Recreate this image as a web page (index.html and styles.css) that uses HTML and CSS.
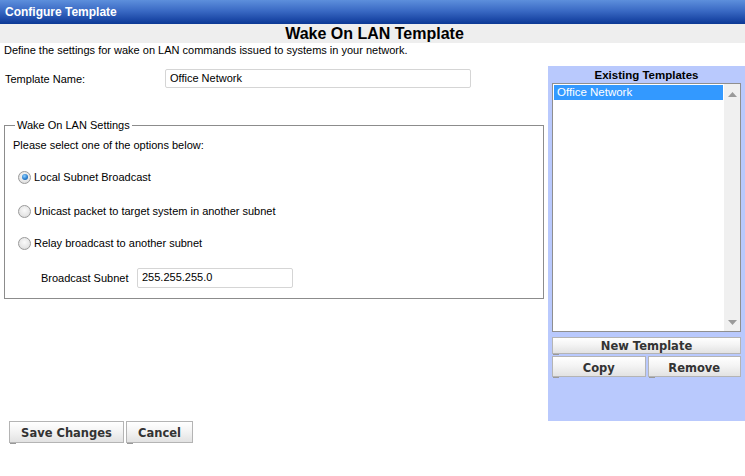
FILE: index.html
```html
<!DOCTYPE html>
<html>
<head>
<meta charset="utf-8">
<link rel="stylesheet" href="styles.css">
</head>
<body>
<div class="titlebar">Configure Template</div>
<div class="heading">Wake On LAN Template</div>
<div class="desc">Define the settings for wake on LAN commands issued to systems in your network.</div>
<div class="main">
  <div class="left">
    <div class="name-row">
      <span class="name-label">Template Name:</span>
      <div class="textbox name-box">Office Network</div>
    </div>
    <fieldset class="settings">
      <legend>Wake On LAN Settings</legend>
      <div class="prompt">Please select one of the options below:</div>
      <div class="opt opt1"><span class="radio checked"></span>Local Subnet Broadcast</div>
      <div class="opt opt2"><span class="radio"></span>Unicast packet to target system in another subnet</div>
      <div class="opt opt3"><span class="radio"></span>Relay broadcast to another subnet</div>
      <div class="subnet-row">
        <span class="subnet-label">Broadcast Subnet</span>
        <div class="textbox subnet-box">255.255.255.0</div>
      </div>
    </fieldset>
  </div>
  <div class="panel">
    <div class="panel-title">Existing Templates</div>
    <div class="listbox">
      <div class="list-items">
        <div class="item selected">Office Network</div>
      </div>
      <div class="scrollbar">
        <svg class="arrow" width="9" height="5" viewBox="0 0 9 5"><path d="M0 5 L4.5 0 L9 5 Z" fill="#9a9a9a"/></svg>
        <svg class="arrow" width="9" height="5" viewBox="0 0 9 5"><path d="M0 0 L4.5 5 L9 0 Z" fill="#9a9a9a"/></svg>
      </div>
    </div>
    <div class="btn wide">New Template</div>
    <div class="btn-row">
      <div class="btn half">Copy</div>
      <div class="btn half">Remove</div>
    </div>
  </div>
</div>
<div class="footer">
  <div class="btn save">Save Changes</div>
  <div class="btn cancel">Cancel</div>
</div>
</body>
</html>
```
FILE: styles.css
```css
* { box-sizing: border-box; }
html, body { margin: 0; padding: 0; background: #fff; }
body {
  width: 745px;
  height: 476px;
  font-family: "Liberation Sans", Arial, sans-serif;
  font-size: 11px;
  color: #000;
  overflow: hidden;
}
.titlebar {
  height: 24px;
  background: linear-gradient(to bottom, #5d8fdc 0%, #3a6ac4 45%, #1d4aa8 80%, #0b3894 100%);
  color: #fff;
  font-weight: bold;
  font-size: 12px;
  line-height: 24px;
  padding-left: 5px;
}
.heading {
  height: 19px;
  background: #eeeeee;
  text-align: center;
  font-weight: bold;
  font-size: 16px;
  line-height: 20px;
  padding-left: 4px;
}
.desc {
  height: 15px;
  line-height: 15px;
  padding-left: 4px;
}
.main {
  display: flex;
  margin-top: 8px;
  height: 355px;
}
.left {
  width: 548px;
  padding-left: 4px;
}
.name-row {
  display: flex;
  align-items: center;
  margin-top: 3px;
  height: 19px;
}
.name-label {
  width: 161px;
  padding-left: 1px;
}
.textbox {
  height: 19px;
  border: 1px solid #d5d5d5;
  border-radius: 2px;
  line-height: 17px;
  padding-left: 4px;
  background: #fff;
}
.name-box { width: 306px; }
.settings {
  margin: 31px 0 0 0;
  width: 540px;
  height: 180px;
  border: 1px solid #8c8c8c;
  padding: 0 0 0 8px;
}
.settings legend {
  padding: 0 2px;
  margin-left: 2px;
  font-size: 11px;
}
.prompt {
  margin-top: 8px;
  height: 13px;
  line-height: 13px;
}
.opt {
  display: flex;
  align-items: center;
  height: 14px;
  line-height: 14px;
}
.opt1 { margin-top: 18px; }
.opt2 { margin-top: 20px; }
.opt3 { margin-top: 18px; }
.radio {
  width: 13px;
  height: 13px;
  border-radius: 50%;
  border: 1px solid #9a9a9a;
  background: radial-gradient(circle at 50% 40%, #fafafa 0%, #e6e6e6 60%, #d2d2d2 100%);
  margin: 0 3px 0 5px;
  position: relative;
}
.radio.checked::after {
  content: "";
  position: absolute;
  left: 2.5px; top: 2.5px;
  width: 6px; height: 6px;
  border-radius: 50%;
  background: radial-gradient(circle at 40% 35%, #8fd0ff 0%, #2a7fcf 55%, #0d4f95 100%);
}
.subnet-row {
  display: flex;
  align-items: center;
  margin-top: 18px;
  height: 20px;
}
.subnet-label {
  width: 124px;
  padding-left: 28px;
  white-space: nowrap;
}
.subnet-box { width: 156px; height: 20px; }
.panel {
  width: 197px;
  background: #b9c9fd;
  padding: 0 4px;
  display: flex;
  flex-direction: column;
}
.panel-title {
  text-align: center;
  font-weight: bold;
  height: 17px;
  line-height: 17px;
  font-size: 11.5px;
  padding-top: 1px;
}
.listbox {
  height: 249px;
  border: 1px solid #8f8f8f;
  background: #fff;
  display: flex;
}
.list-items {
  flex: 1;
  padding: 1px;
}
.item {
  height: 15px;
  line-height: 15px;
  padding-left: 3px;
  font-size: 11.5px;
}
.item.selected {
  background: #3399ff;
  color: #fff;
}
.scrollbar {
  width: 16px;
  background: #f0f0f0;
  display: flex;
  flex-direction: column;
  justify-content: space-between;
  align-items: center;
  padding: 8px 0 6px;
}
.btn {
  height: 18px;
  border: 1px solid #b4b4b4;
  background: linear-gradient(to bottom, #ffffff 0%, #f4f4f4 45%, #e2e2e2 100%);
  font-family: "DejaVu Sans", Verdana, sans-serif;
  font-weight: bold;
  font-size: 11.5px;
  color: #333;
  text-align: center;
  line-height: 17px;
  position: relative;
}
.btn::after {
  content: "";
  position: absolute;
  left: 0; bottom: -2px;
  width: 6px; height: 1px;
  background: #999;
}
.wide { margin-top: 5px; height: 17px; }
.btn-row {
  display: flex;
  gap: 2px;
  margin-top: 2px;
}
.half { flex: 1; height: 21px; line-height: 22px; }
.footer {
  display: flex;
  gap: 2px;
  padding-left: 9px;
}
.save { width: 115px; height: 22px; line-height: 23px; }
.cancel { width: 67px; height: 22px; line-height: 23px; }
```
